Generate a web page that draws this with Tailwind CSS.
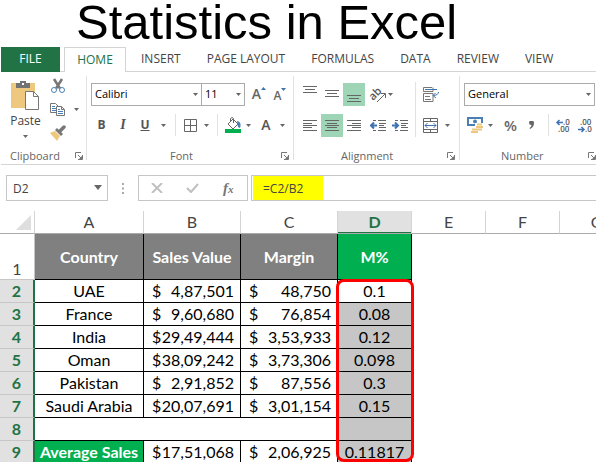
<!DOCTYPE html>
<html lang="en">
<head>
    <meta charset="UTF-8">
    <meta name="viewport" content="width=device-width, initial-scale=1.0">
    <title>Statistics in Excel</title>
    <script src="https://cdn.jsdelivr.net/npm/@tailwindcss/browser@4"></script>
</head>
<body class="bg-white font-['Open_Sans',sans-serif] text-xs text-[#444] overflow-x-hidden">
    <!-- Shared icons -->
    <svg class="hidden">
        <symbol id="caret" viewBox="0 0 5 3"><path d="M0 0h5L2.500 3z" fill="#666"/></symbol>
        <symbol id="launcher" viewBox="0 0 8 8"><path d="M.5 6V.5H6M3 3l3 3M7.500 3v4.500H3" fill="none" stroke="#777"/><path d="M7 4v3H4z" fill="#777"/></symbol>
    </svg>

    <h1 class="h-[47px] pl-[76px] font-['Liberation_Sans',sans-serif] text-[49px] leading-[44px] text-black whitespace-nowrap">Statistics in Excel</h1>

    <!-- Tabs -->
    <nav class="flex h-[25px] pl-px leading-[24px] whitespace-nowrap">
        <a href="#" class="w-[59px] bg-[#217346] text-center text-white">FILE</a>
        <span class="w-1 border-b border-[#d4d4d4]"></span>
        <a href="#" class="w-[62px] border border-b-0 border-[#d4d4d4] text-center text-[#217346]">HOME</a>
        <div class="flex flex-1 gap-[26px] border-b border-[#d4d4d4] pl-[15px]">
            <a href="#">INSERT</a>
            <a href="#">PAGE LAYOUT</a>
            <a href="#">FORMULAS</a>
            <a href="#">DATA</a>
            <a href="#">REVIEW</a>
            <a href="#">VIEW</a>
        </div>
    </nav>

    <!-- Ribbon -->
    <div class="ml-px flex h-[93px] border-b border-[#d4d4d4] pt-1 pb-1">
        <section class="flex w-[86px] shrink-0 flex-col border-r border-[#e1e1e1]">
            <div class="flex h-[74px] shrink-0">
                <button class="flex w-[49px] flex-col items-center pt-1">
                    <svg class="h-[31px] w-[29px] shrink-0" viewBox="0 0 29 31">
                        <path d="M0 3h24v25H0z" fill="#edc87e"/>
                        <path d="M5 8V3h4V1h6v2h4v5z" fill="#737373"/>
                        <path d="M11 3h2v2h-2z" fill="#fff"/>
                        <path d="M14.500 11.500h8l5 5v13h-13z" fill="#fff" stroke="#777"/>
                        <path d="M22.500 11.500v5h5" fill="none" stroke="#777"/>
                    </svg>
                    <span class="mt-[2px] leading-4">Paste</span>
                    <svg class="mt-[6px] h-[3px] w-[5px] shrink-0"><use href="#caret"/></svg>
                </button>
                <div class="flex flex-col gap-2 pt-[2px]">
                    <button aria-label="Cut"><svg class="h-4 w-4" viewBox="0 0 16 16">
                        <path d="M4 1l6 9.500M12 1L6 10.500" stroke="#777" stroke-width="2.500"/>
                        <circle cx="4" cy="12" r="2.500" fill="#fff" stroke="#4a7fb5"/><circle cx="12" cy="12" r="2.500" fill="#fff" stroke="#4a7fb5"/>
                    </svg></button>
                    <button aria-label="Copy" class="flex items-center gap-2"><svg class="h-[15px] w-4" viewBox="0 0 16 15">
                        <path d="M.5 1.500h5l3 3v6h-8z" fill="#fff" stroke="#777"/>
                        <path d="M2 4.500h3M2 6.500h4M2 8.500h4" stroke="#4a7fb5"/>
                        <path d="M6.500 4.500h5l3 3v6h-8z" fill="#fff" stroke="#777"/>
                        <path d="M11.500 4.500v3h3" fill="none" stroke="#777"/>
                        <path d="M8 7.500h2M8 9.500h5M8 11.500h5" stroke="#4a7fb5"/>
                    </svg><svg class="h-[3px] w-[5px]"><use href="#caret"/></svg></button>
                    <button aria-label="Format Painter"><svg class="h-4 w-4" viewBox="0 0 16 16">
                        <path d="M0 8l5-2 5 5-3 5z" fill="#edc87e"/>
                        <path d="M5 5l2-2 6 6-2 2z" fill="#777"/>
                        <path d="M10 6l4-4" stroke="#777" stroke-width="3.500" stroke-linecap="round"/>
                    </svg></button>
                </div>
            </div>
            <div class="flex shrink-0 items-center pl-[9px] text-[11px] leading-3 text-[#666]"><span class="w-[65px]">Clipboard</span><button aria-label="Clipboard settings"><svg class="h-2 w-2"><use href="#launcher"/></svg></button></div>
        </section>

        <section class="flex w-[207px] shrink-0 flex-col border-r border-[#e1e1e1]">
            <div class="flex h-[37px] shrink-0 items-center pl-1">
                <div class="relative">
                    <select aria-label="Font" class="block h-[23px] w-[111px] appearance-none border border-[#ababab] pl-[3px] text-[11px] text-black"><option>Calibri</option></select>
                    <svg class="pointer-events-none absolute top-[10px] right-1 h-[3px] w-[5px]"><use href="#caret"/></svg>
                </div>
                <div class="relative">
                    <select aria-label="Font size" class="block h-[23px] w-[43px] appearance-none border border-l-0 border-[#ababab] pl-[3px] text-[11px] text-black"><option>11</option></select>
                    <svg class="pointer-events-none absolute top-[10px] right-1 h-[3px] w-[5px]"><use href="#caret"/></svg>
                </div>
                <button aria-label="Increase font size" class="flex w-6 justify-center pl-1 text-[14px] font-semibold text-[#666]">A<svg class="mt-[2px] h-[3px] w-[5px]" viewBox="0 0 5 3"><path d="M0 3h5L2.500 0z" fill="#3f73b0"/></svg></button>
                <button aria-label="Decrease font size" class="flex w-[22px] justify-center pt-[2px] text-xs font-semibold text-[#666]">A<svg class="h-[3px] w-[5px]" viewBox="0 0 5 3"><path d="M0 0h5L2.500 3z" fill="#3f73b0"/></svg></button>
            </div>
            <div class="flex h-[24px] shrink-0 items-center pl-1 text-[#555]">
                <button class="w-[21px] font-bold">B</button>
                <button class="w-[22px] font-['Liberation_Serif',serif] text-sm font-bold italic">I</button>
                <button class="w-[22px] font-bold underline">U</button>
                <svg class="mx-[5px] h-[3px] w-[5px]"><use href="#caret"/></svg>
                <span class="mx-1 h-[22px] w-px bg-[#e1e1e1]"></span>
                <button aria-label="Borders" class="flex w-[20px] justify-center"><svg class="h-[13px] w-[13px]" viewBox="0 0 13 13"><path d="M.5.5h12v12H.5zM6.500 0v13M0 6.500h13" fill="none" stroke="#666"/></svg></button>
                <svg class="mx-1 h-[3px] w-[5px]"><use href="#caret"/></svg>
                <span class="mx-1 h-[22px] w-px bg-[#e1e1e1]"></span>
                <button aria-label="Fill Color" class="ml-[3px]"><svg class="h-4 w-4" viewBox="0 0 16 16">
                    <path d="M8 2l5 5-5 5-5-5zM5.500 5V1.500q1.500-2 3 0V6" fill="none" stroke="#666"/><path d="M12 4q5 1 3 7l-2-1z" fill="#4a7fb5"/><path d="M0 12h16v4H0z" fill="#00b050"/>
                </svg></button>
                <svg class="mx-[5px] h-[3px] w-[5px]"><use href="#caret"/></svg>
                <button aria-label="Font Color" class="w-5 text-sm font-semibold">A</button>
                <svg class="ml-1 h-[3px] w-[5px]"><use href="#caret"/></svg>
            </div>
            <div class="mt-[13px] flex shrink-0 items-center justify-end pr-1 text-[11px] leading-3 text-[#666]"><span class="w-[111px]">Font</span><button aria-label="Font settings"><svg class="h-2 w-2"><use href="#launcher"/></svg></button></div>
        </section>

        <section class="flex w-[166px] shrink-0 flex-col border-r border-[#e1e1e1]">
            <div class="flex h-[61px] shrink-0">
                <div class="w-[121px] pl-[5px]">
                    <div class="flex h-[37px] items-center">
                        <button aria-label="Top Align" class="flex h-[23px] w-[22px] justify-center pt-[3px]"><svg class="h-4 w-[14px]" viewBox="0 0 14 16"><path d="M0 .5h14M2 3.500h10M0 6.500h14" stroke="#666"/></svg></button>
                        <button aria-label="Middle Align" class="flex h-[23px] w-[22px] justify-center pt-[3px]"><svg class="h-4 w-[14px]" viewBox="0 0 14 16"><path d="M0 4.500h14M2 7.500h10M0 10.500h14" stroke="#666"/></svg></button>
                        <button aria-label="Bottom Align" class="flex h-[23px] w-[22px] justify-center bg-[#9fd5b7] pt-[3px]"><svg class="h-4 w-[14px]" viewBox="0 0 14 16"><path d="M0 9.500h14M2 12.500h10M0 15.500h14" stroke="#666"/></svg></button>
                        <button aria-label="Orientation" class="ml-[5px]"><svg class="h-4 w-[18px] overflow-visible" viewBox="0 0 18 16">
                            <text x="0" y="11" transform="rotate(-45 5 9)" font-size="11" font-weight="600" fill="#555">ab</text>
                            <path d="M7 15l8-8M11 6.500h4.500V11" fill="none" stroke="#666"/>
                        </svg></button>
                        <svg class="h-[3px] w-[5px]"><use href="#caret"/></svg>
                    </div>
                    <div class="flex h-[24px] items-center">
                        <button aria-label="Align Left" class="flex h-[23px] w-[22px] items-center justify-center"><svg class="h-[11px] w-[14px]" viewBox="0 0 14 11"><path d="M0 .5h14M0 3.500h9M0 5.500h14M0 7.500h9M0 10.500h14" stroke="#666"/></svg></button>
                        <button aria-label="Center" class="flex h-[23px] w-[22px] items-center justify-center bg-[#9fd5b7]"><svg class="h-[11px] w-[14px]" viewBox="0 0 14 11"><path d="M0 .5h14M2 3.500h10M0 5.500h14M2 7.500h10M0 10.500h14" stroke="#666"/></svg></button>
                        <button aria-label="Align Right" class="flex h-[23px] w-[22px] items-center justify-center"><svg class="h-[11px] w-[14px]" viewBox="0 0 14 11"><path d="M0 .5h14M5 3.500h9M0 5.500h14M5 7.500h9M0 10.500h14" stroke="#666"/></svg></button>
                        <button aria-label="Decrease Indent" class="ml-[5px]"><svg class="h-[11px] w-4" viewBox="0 0 16 11"><path d="M3 .5h3M8 .5h8M9 3.500h7M9 5.500h5M9 7.500h7M3 10.500h3M8 10.500h8" stroke="#666"/><path d="M7 5.500H1M4 2.500l-3 3 3 3" fill="none" stroke="#3f73b0" stroke-width="2"/></svg></button>
                        <button aria-label="Increase Indent" class="ml-[6px]"><svg class="h-[11px] w-4" viewBox="0 0 16 11"><path d="M3 .5h3M8 .5h8M9 3.500h7M9 5.500h5M9 7.500h7M3 10.500h3M8 10.500h8" stroke="#666"/><path d="M0 5.500h6M3 2.500l3 3-3 3" fill="none" stroke="#3f73b0" stroke-width="2"/></svg></button>
                    </div>
                </div>
                <span class="mt-[6px] w-px bg-[#e1e1e1]"></span>
                <div class="pl-[7px]">
                    <div class="flex h-[37px] items-center">
                        <button aria-label="Wrap Text"><svg class="h-[15px] w-4" viewBox="0 0 16 15">
                            <path d="M9 .5H.5v4H10v-4M.5 6.500H10v8H.5zM2 9.500h5M2 12.500h6" fill="none" stroke="#777"/>
                            <path d="M2 2.500h12M15.500 5q0 3-5 3.500M12.500 6L10 8.500l3 2.500" fill="none" stroke="#3f73b0"/>
                        </svg></button>
                    </div>
                    <div class="flex h-[24px] items-center">
                        <button aria-label="Merge and Center"><svg class="h-[15px] w-[15px]" viewBox="0 0 15 15">
                            <path d="M.5.5h14v14H.5zM0 3.500h15M0 11.500h15M7.500 0v3M7.500 12v3" fill="none" stroke="#666"/>
                            <path d="M2 7.500h11M4.500 5L2 7.500 4.500 10M10.500 5L13 7.500 10.500 10" fill="none" stroke="#3f73b0"/>
                        </svg></button>
                        <svg class="ml-[7px] h-[3px] w-[5px]"><use href="#caret"/></svg>
                    </div>
                </div>
            </div>
            <div class="mt-[13px] flex shrink-0 items-center justify-end pr-1 text-[11px] leading-3 text-[#666]"><span class="w-[106px]">Alignment</span><button aria-label="Alignment settings"><svg class="h-2 w-2"><use href="#launcher"/></svg></button></div>
        </section>

        <section class="flex w-[137px] shrink-0 flex-col pl-1">
            <div class="flex h-[37px] shrink-0 items-center">
                <div class="relative">
                    <select aria-label="Number format" class="block h-[23px] w-[131px] appearance-none border border-[#ababab] pl-[3px] text-[11px] text-black"><option>General</option></select>
                    <svg class="pointer-events-none absolute top-[10px] right-1 h-[3px] w-[5px]"><use href="#caret"/></svg>
                </div>
            </div>
            <div class="flex h-[24px] shrink-0 items-center text-[#666]">
                <button aria-label="Accounting Number Format" class="ml-[3px]"><svg class="h-[17px] w-4" viewBox="0 0 16 17">
                    <path d="M0 0h16v9H0z" fill="#4a7fb5"/><path d="M2 2h12v5H2z" fill="#fff"/><circle cx="8" cy="4.500" r="2" fill="#4a7fb5"/>
                    <path d="M8 6h8v11H8zM4 11h8v6H4z" fill="#fff"/>
                    <path d="M10 7.500h5M9 10h7M9 12.500h6M5 12.500h5M4 15h7" stroke="#edc87e" stroke-width="2"/>
                </svg></button>
                <svg class="mx-[5px] h-[3px] w-[5px]"><use href="#caret"/></svg>
                <button aria-label="Percent Style" class="w-[25px] text-[15px] leading-5 font-semibold">%</button>
                <button aria-label="Comma Style" class="flex w-[17px] justify-center"><svg class="h-2 w-[5px]" viewBox="0 0 5 8"><path d="M0 2a2.500 2.500 0 015 0q0 4-4 6l-.5-1q2-1 2-3Q0 4 0 2z" fill="#666"/></svg></button>
                <span class="mr-[7px] ml-2 h-[22px] w-px bg-[#e1e1e1]"></span>
                <button aria-label="Increase Decimal"><svg class="h-[15px] w-4 overflow-visible" viewBox="0 0 16 15"><path d="M7 4.500H1M3.500 2L1 4.500 3.500 7" fill="none" stroke="#3f73b0" stroke-width="1.500"/><text x="7" y="7" font-size="8" font-weight="600" fill="#555">.0</text><text x="2" y="14" font-size="8" font-weight="600" fill="#555">.00</text></svg></button>
                <button aria-label="Decrease Decimal" class="ml-[6px]"><svg class="h-[15px] w-4 overflow-visible" viewBox="0 0 16 15"><path d="M0 11.500h6M3.500 9L6 11.500 3.500 14" fill="none" stroke="#3f73b0" stroke-width="1.500"/><text x="2" y="7" font-size="8" font-weight="600" fill="#555">.00</text><text x="7" y="14" font-size="8" font-weight="600" fill="#555">.0</text></svg></button>
            </div>
            <div class="mt-[13px] flex shrink-0 items-center pl-[37px] text-[11px] leading-3 text-[#666]"><span class="w-[87px]">Number</span><button aria-label="Number settings"><svg class="h-2 w-2"><use href="#launcher"/></svg></button></div>
        </section>
    </div>

    <!-- Formula bar -->
    <div class="flex h-[46px] items-center pl-[6px]">
        <div class="relative">
            <input aria-label="Name Box" value="D2" class="block h-[26px] w-[102px] border border-[#c6c6c6] pl-[6px] text-xs text-[#444]">
            <svg class="pointer-events-none absolute top-[10px] right-[6px] h-[5px] w-2"><use href="#caret"/></svg>
        </div>
        <svg class="mx-[13px] h-[11px] w-[4px]" viewBox="0 0 4 11"><path d="M1 0h2v2H1zM1 4.500h2v2H1zM1 9h2v2H1z" fill="#aaa"/></svg>
        <div class="flex h-[26px] w-[110px] items-center border border-[#c6c6c6] pl-3">
            <button aria-label="Cancel" class="w-[13px]"><svg class="h-[10px] w-3" viewBox="0 0 12 10"><path d="M1 0l10 10M11 0L1 10" stroke="#c0c0c0" stroke-width="2"/></svg></button>
            <button aria-label="Enter" class="ml-[22px] w-[13px]"><svg class="h-[10px] w-[13px]" viewBox="0 0 13 10"><path d="M1 5l4 4 7-8" fill="none" stroke="#c0c0c0" stroke-width="2"/></svg></button>
            <button aria-label="Insert Function" class="ml-6 font-['Liberation_Serif',serif] text-[15px] leading-5 font-bold text-[#777] italic">f<span class="text-[11px]">x</span></button>
        </div>
        <div class="ml-[3px] h-[26px] flex-1 border border-r-0 border-[#c6c6c6] pl-px">
            <input aria-label="Formula" value="=C2/B2" class="block h-6 w-[70px] bg-[#ffff00] pl-[10px] text-xs text-[#444]">
        </div>
    </div>

    <!-- Sheet -->
    <div class="relative overflow-hidden">
        <table class="w-[634px] table-fixed border-separate border-spacing-0 font-[Lato,sans-serif] text-base leading-5 text-black [&_tbody_td]:border-black [&_tbody_td]:p-0">
            <colgroup>
                <col class="w-[35px]"><col class="w-[109px]"><col class="w-[97px]"><col class="w-[97px]"><col class="w-[74px]"><col class="w-[74px]"><col class="w-[74px]"><col class="w-[74px]">
            </colgroup>
            <thead class="text-[#444]">
                <tr class="h-[23px] [&>th]:border-r [&>th]:border-b [&>th]:border-r-[#d4d4d4] [&>th]:border-b-[#ababab] [&>th]:p-0 [&>th]:font-normal">
                    <th><svg class="ml-4 h-[15px] w-[15px]" viewBox="0 0 15 15"><path d="M15 0v15H0z" fill="#dedede"/></svg></th>
                    <th scope="col">A</th><th scope="col">B</th><th scope="col">C</th>
                    <th scope="col" class="bg-[#e1e1e1] text-[#217346] shadow-[inset_0_-1px_#217346]"><b>D</b></th>
                    <th scope="col">E</th><th scope="col">F</th><th scope="col">G</th>
                </tr>
            </thead>
            <tbody class="[&_th]:p-0">
                <tr class="h-[46px] text-center font-bold text-white [&>td]:border-r [&>td]:border-b">
                    <th scope="row" class="border-r border-b border-[#c6c6c6] align-bottom font-normal text-[#444]">1</th>
                    <td class="bg-[#808080]">Country</td>
                    <td class="bg-[#808080] whitespace-nowrap">Sales Value</td>
                    <td class="bg-[#808080]">Margin</td>
                    <td class="bg-[#00b050]">M%</td>
                </tr>
                <tr class="h-[23px] [&>td]:border-r [&>td]:border-b">
                    <th scope="row" class="border-r-2 border-b border-r-[#217346] border-b-[#c6c6c6] bg-[#e1e1e1] text-[#217346]">2</th>
                    <td class="text-center">UAE</td>
                    <td><div class="flex justify-between pr-[6px] pl-2"><span>$</span><span>4,87,501</span></div></td>
                    <td><div class="flex justify-between pr-[6px] pl-2"><span>$</span><span>48,750</span></div></td>
                    <td class="text-center">0.1</td>
                </tr>
                <tr class="h-[23px] [&>td]:border-r [&>td]:border-b">
                    <th scope="row" class="border-r-2 border-b border-r-[#217346] border-b-[#c6c6c6] bg-[#e1e1e1] text-[#217346]">3</th>
                    <td class="text-center">France</td>
                    <td><div class="flex justify-between pr-[6px] pl-2"><span>$</span><span>9,60,680</span></div></td>
                    <td><div class="flex justify-between pr-[6px] pl-2"><span>$</span><span>76,854</span></div></td>
                    <td class="bg-[#c6c6c6] text-center">0.08</td>
                </tr>
                <tr class="h-[23px] [&>td]:border-r [&>td]:border-b">
                    <th scope="row" class="border-r-2 border-b border-r-[#217346] border-b-[#c6c6c6] bg-[#e1e1e1] text-[#217346]">4</th>
                    <td class="text-center">India</td>
                    <td><div class="flex justify-between pr-[6px] pl-2"><span>$</span><span>29,49,444</span></div></td>
                    <td><div class="flex justify-between pr-[6px] pl-2"><span>$</span><span>3,53,933</span></div></td>
                    <td class="bg-[#c6c6c6] text-center">0.12</td>
                </tr>
                <tr class="h-[23px] [&>td]:border-r [&>td]:border-b">
                    <th scope="row" class="border-r-2 border-b border-r-[#217346] border-b-[#c6c6c6] bg-[#e1e1e1] text-[#217346]">5</th>
                    <td class="text-center">Oman</td>
                    <td><div class="flex justify-between pr-[6px] pl-2"><span>$</span><span>38,09,242</span></div></td>
                    <td><div class="flex justify-between pr-[6px] pl-2"><span>$</span><span>3,73,306</span></div></td>
                    <td class="bg-[#c6c6c6] text-center">0.098</td>
                </tr>
                <tr class="h-[23px] [&>td]:border-r [&>td]:border-b">
                    <th scope="row" class="border-r-2 border-b border-r-[#217346] border-b-[#c6c6c6] bg-[#e1e1e1] text-[#217346]">6</th>
                    <td class="text-center">Pakistan</td>
                    <td><div class="flex justify-between pr-[6px] pl-2"><span>$</span><span>2,91,852</span></div></td>
                    <td><div class="flex justify-between pr-[6px] pl-2"><span>$</span><span>87,556</span></div></td>
                    <td class="bg-[#c6c6c6] text-center">0.3</td>
                </tr>
                <tr class="h-[23px] [&>td]:border-r [&>td]:border-b">
                    <th scope="row" class="border-r-2 border-b border-r-[#217346] border-b-[#c6c6c6] bg-[#e1e1e1] text-[#217346]">7</th>
                    <td class="text-center">Saudi Arabia</td>
                    <td><div class="flex justify-between pr-[6px] pl-2"><span>$</span><span>20,07,691</span></div></td>
                    <td><div class="flex justify-between pr-[6px] pl-2"><span>$</span><span>3,01,154</span></div></td>
                    <td class="bg-[#c6c6c6] text-center">0.15</td>
                </tr>
                <tr class="h-[23px] [&>td]:border-b">
                    <th scope="row" class="border-r-2 border-b border-r-[#217346] border-b-[#c6c6c6] bg-[#e1e1e1] text-[#217346]">8</th>
                    <td></td><td></td><td></td><td class="bg-[#c6c6c6]"></td>
                </tr>
                <tr class="h-[21px] [&>td]:border-r">
                    <th scope="row" class="border-r-2 border-r-[#217346] bg-[#e1e1e1] text-[#217346]">9</th>
                    <td class="bg-[#00b050] text-center font-bold whitespace-nowrap text-white">Average Sales</td>
                    <td><div class="flex justify-between pr-[6px] pl-2"><span>$</span><span>17,51,068</span></div></td>
                    <td><div class="flex justify-between pr-[6px] pl-2"><span>$</span><span>2,06,925</span></div></td>
                    <td class="bg-[#c6c6c6] text-center">0.11817</td>
                </tr>
            </tbody>
        </table>
        <!-- Highlight round the M% values -->
        <div class="pointer-events-none absolute top-[68px] bottom-0 left-[336px] w-[78px] rounded-lg border-3 border-[#ff0000]"></div>
    </div>
</body>
</html>
